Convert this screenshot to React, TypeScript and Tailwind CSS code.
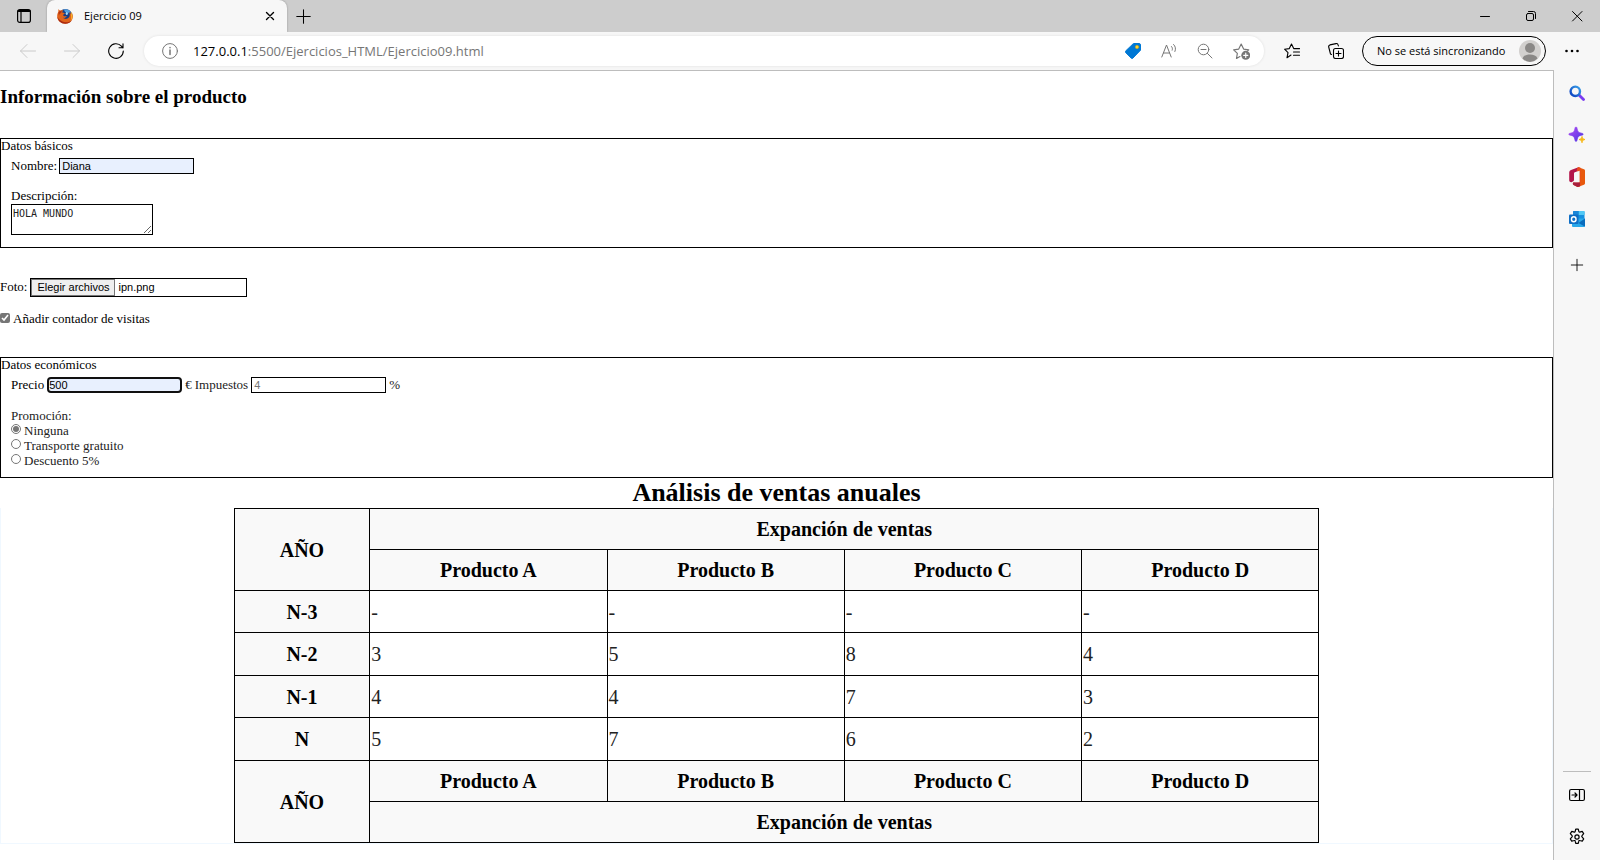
import { useState } from 'react';
import type { ReactNode } from 'react';

type IconProps = { children: ReactNode; size?: string; width?: number };

function Icon({ children, size = 'size-4', width = 1 }: IconProps) {
  return (
    <svg
      viewBox="0 0 16 16"
      className={`${size} shrink-0`}
      fill="none"
      stroke="currentColor"
      strokeWidth={width}
      strokeLinecap="round"
      strokeLinejoin="round"
      aria-hidden="true"
    >
      {children}
    </svg>
  );
}

function IconButton({ label, className = '', children }: { label: string; className?: string; children: ReactNode }) {
  return (
    <button type="button" aria-label={label} className={`flex shrink-0 items-center justify-center ${className}`}>
      {children}
    </button>
  );
}

function Favicon() {
  return (
    <svg viewBox="0 0 16 16" className="size-4 shrink-0" aria-hidden="true">
      <circle cx="8.4" cy="7.8" r="6.9" fill="#173f86" />
      <path d="M7 1.4c3-.7 6 1 7 3.6-1.600-1-2.600-.4-3 .7-1.500-.9-3.600-1.600-4-4.300z" fill="#4f9fe0" />
      <path d="M9.500 4c1 .4 1.600 1.400 1.300 2.400l-1.500.6-.8-1.400z" fill="#a9dcf7" />
      <path
        d="M1.600.9c.3.900.8 1.400 1.500 1.700C4.200 2 5.500 2 6.500 2.500 5.600 3 5.200 3.800 5.300 4.600l2.300.3c.2.800-.6 1.300-1.400 1.700-.2.800.2 1.500 1 1.700 1 .2 1.500-.5 2.500-.2-.4 1.500-2 2.200-3.600 1.700 1.300 1.500 4.300 1.600 5.700-.2 1.200-1.500 1.400-3.600.3-5.600 1.500 1 2.300 2.300 2.500 3.600.3-1.300 0-2.700-.6-3.800 1.500 1.500 2.200 3.800 1.700 6.200-.8 3.500-3.900 5.800-7.500 5.700C4 15.600.6 12.600.2 8.700 0 6.500.8 4.800 1.400 3.700c-.2-1 0-2 .2-2.800z"
        fill="#e0631a"
      />
      <path d="M.3 8.700c.5 3.900 3.600 6.900 7.900 7 3.100 0 5.600-1.500 6.900-4-2 2.200-4.600 3-7.300 2.500C4.500 13.600 1.700 11.600.3 8.700z" fill="#a92a12" />
      <path d="M13.500 3.600c1.500 1.500 2.200 3.800 1.700 6.200-.3 1.300-1 2.500-1.900 3.500 1-2.200 1.200-4.200.8-5.900.3-1.300 0-2.700-.6-3.800z" fill="#fbc22d" />
      <path d="M1.900 3.800c.8-.7 2-.9 3-.5-.6.500-.8 1.200-.6 1.800C3 5.300 2.300 6.300 2 7.400c-.6-1.200-.6-2.500-.1-3.600z" fill="#b33314" />
    </svg>
  );
}

function TabStrip() {
  return (
    <header className="flex h-8 items-stretch bg-[#cdcdcd] text-black">
      <IconButton label="Menú de acciones de pestañas" className="w-[47px]">
        <Icon width={1.2}>
          <rect x="1.600" y="1.600" width="12.800" height="12.800" rx="2.200" />
          <path d="M2.500 3h11" strokeWidth="2.200" />
          <path d="M5 4v10" />
        </Icon>
      </IconButton>
      <div className="flex w-60 items-center rounded-t-lg bg-[#f7f7f7] pl-[10px] pr-[9px] shadow-[0_0_2px_#00000055]">
        <Favicon />
        <span className="ml-[11px] flex-1 text-[11px] leading-4">Ejercicio 09</span>
        <IconButton label="Cerrar pestaña" className="size-4">
          <Icon size="size-[14px]" width={1.600}>
            <path d="m4 4 8 8M12 4l-8 8" />
          </Icon>
        </IconButton>
      </div>
      <IconButton label="Nueva pestaña" className="w-8">
        <Icon size="size-[15px]" width={1.100}>
          <path d="M8 .8v14.400M.8 8h14.400" />
        </Icon>
      </IconButton>
      <div className="flex-1" />
      <IconButton label="Minimizar" className="w-[46px]">
        <Icon>
          <path d="M3.500 8.500h9" />
        </Icon>
      </IconButton>
      <IconButton label="Restaurar" className="w-[46px]">
        <Icon>
          <rect x="3.500" y="5.500" width="7" height="7" rx="1.500" />
          <path d="M5.500 3.500h5a2 2 0 0 1 2 2v5" />
        </Icon>
      </IconButton>
      <IconButton label="Cerrar" className="w-[46px]">
        <Icon>
          <path d="m3.500 3.500 9.500 9.500M13 3.500 3.500 13" />
        </Icon>
      </IconButton>
    </header>
  );
}

function Toolbar() {
  return (
    <nav className="flex h-[38px] items-center bg-[#f7f7f7] px-[6px] text-black" aria-label="Barra de herramientas">
      <IconButton label="Atrás" className="h-8 w-11 text-[#cacaca]">
        <Icon>
          <path d="M15.500 8H.5M7 1.500.5 8 7 14.500" />
        </Icon>
      </IconButton>
      <IconButton label="Adelante" className="h-8 w-11 text-[#cacaca]">
        <Icon>
          <path d="M.5 8h15M9 1.500 15.500 8 9 14.500" />
        </Icon>
      </IconButton>
      <IconButton label="Actualizar" className="h-8 w-11">
        <Icon width={1.100}>
          <path d="M15.300 8A7.300 7.300 0 1 1 13.400 3.100L15 4.800M15 .9v3.900h-4" />
        </Icon>
      </IconButton>
      <div className="ml-[6px] flex h-[30px] flex-1 items-center rounded-full bg-white pl-[18px] pr-[5px] text-[#767676] shadow-[0_0_3px_#0000001a]">
        <Icon>
          <circle cx="8" cy="8" r="7.400" />
          <path d="M8 7v4.500M8 4.500v.3" strokeWidth="1.500" />
        </Icon>
        <span className="ml-[15px] flex-1 text-[13px] leading-5">
          <span className="text-black">127.0.0.1</span>:5500/Ejercicios_HTML/Ejercicio09.html
        </span>
        <IconButton label="Compras" className="h-7 w-9">
          <Icon>
            <path d="M8.800.5H14a1.500 1.500 0 0 1 1.500 1.500v5.200L8 15a1.300 1.300 0 0 1-1.900 0L.8 9.700a1.300 1.300 0 0 1 0-1.900z" fill="#0078d4" stroke="#0078d4" />
            <circle cx="12" cy="4" r="1.700" fill="#ffd335" stroke="#d9a900" strokeWidth=".5" />
          </Icon>
        </IconButton>
        <IconButton label="Leer en voz alta" className="h-7 w-9">
          <Icon>
            <path d="m.8 14 4.700-12 4.700 12M2.400 10h6.200M10.500 3.500c1 1 1.200 2.500.7 3.700M12.600 1.500c2 1.800 2.400 4.600 1.300 7" />
          </Icon>
        </IconButton>
        <IconButton label="Alejar" className="h-7 w-9">
          <Icon>
            <circle cx="6.500" cy="6.500" r="5.300" />
            <path d="m10.400 10.400 4.600 4.600M4 6.500h5" />
          </Icon>
        </IconButton>
        <IconButton label="Agregar a favoritos" className="h-7 w-9">
          <Icon size="size-[17px]" width={1.100}>
            <path d="M6.500 12.800 3.300 14.500l.8-4.700L.6 6.400l4.800-.7L7.700 1l2.300 4.700 4.800.7-1 1" />
            <circle cx="12" cy="11.600" r="4.200" fill="currentColor" stroke="none" />
            <path d="M12 9.600v4M10 11.600h4" stroke="white" />
          </Icon>
        </IconButton>
      </div>
      <IconButton label="Favoritos" className="ml-[6px] h-8 w-11">
        <Icon width={1.100}>
          <path d="M7 12 3 14.700l1-5L.6 6.200l4.700-.6L7.500 1l2.200 4.600h5.800M9.500 9h6M9.500 12.300h6" />
        </Icon>
      </IconButton>
      <IconButton label="Colecciones" className="h-8 w-11">
        <Icon width={1.100}>
          <rect x="5.500" y="5.500" width="10" height="10" rx="2" />
          <path d="M10.500 8v5M8 10.500h5M3.500 11.500 2.500 11 .7 4a1.800 1.800 0 0 1 1.200-2.100L8 .6a1.800 1.800 0 0 1 2.100 1.300l.3 1" />
        </Icon>
      </IconButton>
      <button
        type="button"
        className="ml-1 flex h-[30px] w-[184px] shrink-0 items-center justify-between rounded-full border border-black pl-[14px] pr-1 text-[11px]"
      >
        <span className="whitespace-nowrap">No se está sincronizando</span>
        <svg viewBox="0 0 22 22" className="size-[22px] shrink-0" aria-hidden="true">
          <circle cx="11" cy="11" r="11" fill="#d2d0ce" />
          <circle cx="11" cy="8" r="5" fill="#8a8886" />
          <path d="M3.500 18.500c1-3 4-4 7.500-4s6.500 1 7.500 4A11 11 0 0 1 11 22a11 11 0 0 1-7.500-3.500z" fill="#8a8886" />
        </svg>
      </button>
      <IconButton label="Configuración y más" className="ml-1 h-8 w-11">
        <Icon>
          <g fill="currentColor" stroke="none">
            <circle cx="2.500" cy="8" r="1.300" />
            <circle cx="8" cy="8" r="1.300" />
            <circle cx="13.500" cy="8" r="1.300" />
          </g>
        </Icon>
      </IconButton>
    </nav>
  );
}

function Sidebar() {
  return (
    <aside className="flex w-[46px] shrink-0 flex-col items-center bg-[#f7f7f7] pb-[6px] pt-[6px] text-black">
      <IconButton label="Buscar" className="h-[34px] w-8">
        <svg viewBox="0 0 16 16" className="size-4" fill="none" aria-hidden="true">
          <defs>
            <linearGradient id="lens" x1="0" y1="1" x2="1" y2="0">
              <stop offset="0" stopColor="#0b3fc0" />
              <stop offset="1" stopColor="#3aa0e8" />
            </linearGradient>
          </defs>
          <path d="m10 10 4.500 4.500" stroke="#7a3cf0" strokeWidth="2.800" strokeLinecap="round" />
          <circle cx="6.300" cy="6.300" r="4.700" stroke="url(#lens)" strokeWidth="2.400" />
        </svg>
      </IconButton>
      <IconButton label="Descubrir" className="mt-2 h-[34px] w-8">
        <svg viewBox="0 0 16 16" className="size-4 overflow-visible" aria-hidden="true">
          <defs>
            <linearGradient id="spark" x1="0" y1="0" x2="1" y2="1">
              <stop offset="0" stopColor="#b04bf5" />
              <stop offset="1" stopColor="#4b35e0" />
            </linearGradient>
          </defs>
          <path
            d="M7 0c.8 0 .9.500 1.300 2.200.6 2.600 1.200 3.200 3.600 3.800 1.600.4 2.300.5 2.300 1.200s-.7.800-2.300 1.200c-2.400.6-3 1.200-3.600 3.800C7.900 13.800 7.800 14.400 7 14.400s-.9-.6-1.300-2.200C5.100 9.600 4.500 9 2.100 8.400.5 8-.2 7.900-.2 7.200S.5 6.400 2.100 6c2.400-.6 3-1.200 3.600-3.800C6.100.5 6.200 0 7 0z"
            fill="url(#spark)"
            stroke="url(#spark)"
            strokeWidth=".6"
          />
          <path d="M13 9.500c.3 1.900 1 2.600 3 3-2 .4-2.700 1.100-3 3.200-.3-2.100-1-2.800-3-3.200 2-.4 2.700-1.100 3-3z" fill="#f7b916" stroke="#f7b916" strokeWidth="1" />
        </svg>
      </IconButton>
      <IconButton label="Office" className="mt-2 h-[34px] w-8">
        <svg viewBox="0 0 16 20" className="h-5 w-4" aria-hidden="true">
          <path d="M9.500.2 2 3C.8 3.500.2 4.500.2 5.800v7.500c0 1.500 1.600 2.400 2.800 1.700l1.300-.8c.5-.3.800-.8.800-1.400V6.700c0-.7.500-1.300 1.100-1.500l3.700-1.300z" fill="#b3154a" />
          <path d="M9.500.2 15 2.300c.6.200 1 .8 1 1.400v12.600c0 .6-.4 1.200-1 1.400l-5.500 2V.2z" fill="#e8590c" />
          <path d="M9.500 0C8 1 7.500 2 8 4.500l3 .5v10.200H5.300c-1.500 0-2 1.900-.7 2.700l3.200 1.800c.7.400 1.500.3 2.200 0l1.500-.6V.8z" fill="#ea4b1c" />
          <path d="M5.300 15.200h5.600v4l-1.500.6c-.6.200-1.200.1-1.700-.2L4.500 18c-1.300-.9-.8-2.800.8-2.800z" fill="#a81f3e" />
          <path d="M6.200 5.200 10.600 3.700v11.500H5.300l-.2-1.700V6.700c0-.7.500-1.300 1.100-1.500z" fill="#f7f7f7" />
        </svg>
      </IconButton>
      <IconButton label="Outlook" className="mt-2 h-[34px] w-8">
        <svg viewBox="0 0 16 16" className="size-4" aria-hidden="true">
          <rect x="4" y="0" width="11.500" height="13" rx="1" fill="#1490df" />
          <path d="M4.500 0h5v4h-5.500V.8z" fill="#1a86d8" />
          <path d="M9.800 0h5a.8.800 0 0 1 .8.800V4H9.800z" fill="#50c8f5" />
          <path d="M3 7.500h13V15a1 1 0 0 1-1 1H4a1 1 0 0 1-1-1z" fill="#28a8ea" />
          <path d="M16 7.500 9.500 12l6.200 3.500.3-.5z" fill="#0a6cbd" />
          <rect x="0" y="3.500" width="9.500" height="9.500" rx="1" fill="#0f6fc6" />
          <ellipse cx="4.750" cy="8.250" rx="2.300" ry="2.500" fill="none" stroke="white" strokeWidth="1.400" />
        </svg>
      </IconButton>
      <IconButton label="Agregar" className="mt-3 h-[34px] w-8">
        <Icon size="size-[14px]">
          <path d="M8 1.500v13M1.500 8h13" />
        </Icon>
      </IconButton>
      <div className="flex-1" />
      <hr className="w-7 border-[#bdbdbd]" />
      <IconButton label="Ocultar barra lateral" className="mt-[6px] h-[34px] w-8">
        <Icon width={1.200}>
          <rect x=".6" y="2.500" width="14.800" height="11" rx="1.500" />
          <path d="M10.500 2.500v11M3 8h5M6 6l2 2-2 2" />
        </Icon>
      </IconButton>
      <IconButton label="Configuración" className="mt-2 h-[34px] w-8">
        <svg viewBox="0 0 24 24" className="size-[18px]" fill="none" stroke="currentColor" strokeWidth="1.600" strokeLinejoin="round" aria-hidden="true">
          <circle cx="12" cy="12" r="2.800" />
          <path d="M10.300 1.500h3.400l.7 3.100c.1.500.7.900 1.200.8l3.300-.9 2 3-2.200 2.600c-.5.500-.5 1.200 0 1.700l2.200 2.700-1.900 3.100-3.300-.9c-.6-.2-1.200.2-1.300.8l-.7 3h-3.400l-.7-3c-.1-.6-.7-1-1.300-.8l-3.300.9-1.900-3.100 2.300-2.700c.4-.5.4-1.200 0-1.700L3.100 7.500l2-3 3.300.9c.5.100 1.100-.3 1.200-.8z" />
        </svg>
      </IconButton>
    </aside>
  );
}

const field = 'h-4 w-[135px] border border-black px-[2px] font-["Liberation_Sans",sans-serif] text-[11px] leading-3';
const legend = 'float-left mb-[2px] w-full leading-[13px]';
const panel = 'border border-black';

function ProductForm() {
  const [fileName, setFileName] = useState('ipn.png');
  const promotions = ['Ninguna', 'Transporte gratuito', 'Descuento 5%'];

  return (
    <form className="text-[13px] leading-[15px]">
      <fieldset className={`${panel} mt-[30px] pb-3`}>
        <legend className={legend}>Datos básicos</legend>
        <div className="clear-both px-[10px] pt-1">
          <div className="flex h-4 items-start gap-[2px]">
            <label htmlFor="nombre">Nombre:</label>
            <input id="nombre" type="text" defaultValue="Diana" className={`${field} bg-[#e8f0fe]`} />
          </div>
          <label htmlFor="descripcion" className="mt-[14px] block">
            Descripción:
          </label>
          <textarea
            id="descripcion"
            spellCheck={false}
            defaultValue="HOLA MUNDO"
            className="mt-px block h-[31px] w-[142px] overflow-hidden border border-black px-px pt-[3px] font-['DejaVu_Sans_Mono',monospace] text-[10px] leading-3 text-[#222]"
          />
        </div>
      </fieldset>

      <div className="mt-[30px] flex h-[19px] items-start gap-[3px]">
        <span className="leading-[17px]">Foto:</span>
        <div className="flex h-[19px] w-[217px] items-center border border-black font-['Liberation_Sans',sans-serif] text-[11px]">
          <input
            id="foto"
            type="file"
            multiple
            className="sr-only"
            onChange={(event) => setFileName(event.target.files?.[0]?.name ?? '')}
          />
          <label htmlFor="foto" className="flex h-[17px] w-[84px] items-center justify-center border border-[#767676] bg-[#efefef]">
            Elegir archivos
          </label>
          <span className="ml-[3px]">{fileName}</span>
        </div>
      </div>

      <label className="mt-[14px] flex items-start gap-[3px]">
        <input type="checkbox" defaultChecked className="mt-[2px] size-[10px] accent-[#767676]" />
        Añadir contador de visitas
      </label>

      <fieldset className={`${panel} mt-[31px] pb-[9px]`}>
        <legend className={legend}>Datos económicos</legend>
        <div className="clear-both px-[10px] pt-1">
          <div className="flex h-4 items-start gap-[3px]">
            <label htmlFor="precio">Precio</label>
            <input
              id="precio"
              type="text"
              defaultValue="500"
              className="h-4 w-[135px] rounded border-2 border-[#101010] bg-[#e8f0fe] font-['Liberation_Sans',sans-serif] text-[11px] leading-3"
            />
            <span className="text-[#222]">€</span>
            <label htmlFor="impuestos" className="text-[#222]">
              Impuestos
            </label>
            <input id="impuestos" type="text" placeholder="4" className={`${field} placeholder:text-[#757575]`} />
            <span className="text-[#222]">%</span>
          </div>
          <p className="mt-[15px] text-[#222]">Promoción:</p>
          {promotions.map((name, index) => (
            <label key={name} className="flex items-start gap-[3px] text-[#222]">
              <input type="radio" name="promocion" defaultChecked={index === 0} className="mt-px size-[10px] accent-[#767676]" />
              {name}
            </label>
          ))}
        </div>
      </fieldset>
    </form>
  );
}

const headCell = 'border border-black bg-[#f9f9f9] p-0 text-center font-bold';
const products = ['Producto A', 'Producto B', 'Producto C', 'Producto D'];
const sales = [
  { year: 'N-3', values: ['-', '-', '-', '-'] },
  { year: 'N-2', values: ['3', '5', '8', '4'] },
  { year: 'N-1', values: ['4', '4', '7', '3'] },
  { year: 'N', values: ['5', '7', '6', '2'] },
];

function SalesTable() {
  const productRow = products.map((name) => (
    <th key={name} scope="col" className={headCell}>
      {name}
    </th>
  ));

  return (
    <section>
      <h2 id="ventas" className="text-center text-[26px] font-bold leading-[30px]">
        Análisis de ventas anuales
      </h2>
      <div className="border-x border-b border-[#f0f8ff]">
        <table aria-labelledby="ventas" className="mx-auto w-[70%] table-fixed border-collapse text-[20px] leading-6">
          <colgroup>
            <col className="w-[12.5%]" />
            <col />
            <col />
            <col />
            <col />
          </colgroup>
          <thead>
            <tr className="h-[41px]">
              <th rowSpan={2} className={headCell}>
                AÑO
              </th>
              <th colSpan={4} className={headCell}>
                Expanción de ventas
              </th>
            </tr>
            <tr className="h-[41px]">{productRow}</tr>
          </thead>
          <tbody>
            {sales.map((row) => (
              <tr key={row.year} className="h-[42px] even:h-[43px]">
                <th scope="row" className={headCell}>
                  {row.year}
                </th>
                {row.values.map((value, index) => (
                  <td key={products[index]} className="border border-black p-0 pl-px text-[#222]">
                    {value}
                  </td>
                ))}
              </tr>
            ))}
          </tbody>
          <tfoot>
            <tr className="h-[41px]">
              <th rowSpan={2} className={headCell}>
                AÑO
              </th>
              {productRow}
            </tr>
            <tr className="h-[41px]">
              <th colSpan={4} className={headCell}>
                Expanción de ventas
              </th>
            </tr>
          </tfoot>
        </table>
      </div>
    </section>
  );
}

export default function App() {
  return (
    <div className="flex min-h-screen flex-col bg-white font-['Open_Sans',sans-serif]">
      <TabStrip />
      <Toolbar />
      <div className="flex flex-1 bg-[#f7f7f7]">
        <main className="flex-1 border-r border-t border-[#bdbdbd] bg-white pt-[15px] font-['Liberation_Serif',serif] text-black">
          <h1 className="text-[19px] font-bold leading-[22px]">Información sobre el producto</h1>
          <ProductForm />
          <SalesTable />
        </main>
        <Sidebar />
      </div>
    </div>
  );
}
